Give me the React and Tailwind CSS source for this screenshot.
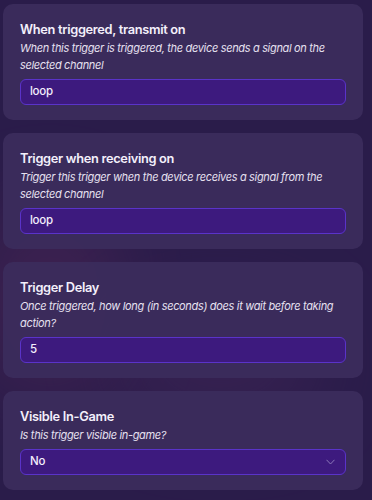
import React from "react";

function Field({ title, desc, value, select }) {
  return (
    <div className="rounded-[10px] bg-[#3b2c5c]/95 px-[17px] pt-[16px] pb-[15px]">
      <div className="text-[12.8px] font-semibold leading-[20px] tracking-[-0.3px] text-[#f4f0fb]">{title}</div>
      <div className="text-[11px] italic leading-[17px] tracking-[-0.33px] text-[#e6e0f0]">{desc}</div>
      <div className="mt-[5px] flex h-[26px] items-center justify-between rounded-[6px] border-[1.5px] border-[#5a33c9] bg-[#3d1a7e] pl-[9px] pr-[10px]">
        <span className="text-[11.5px] font-medium tracking-[-0.3px] text-[#f3eefc]">{value}</span>
        {select && (
          <svg width="9" height="6" viewBox="0 0 9 6" fill="none">
            <path d="M0.5 0.8L4.5 5L8.5 0.8" stroke="#8b78b8" strokeWidth="1" />
          </svg>
        )}
      </div>
    </div>
  );
}

export default function App() {
  return (
    <div
      className="relative h-[500px] w-[372px] overflow-hidden bg-[#2a1c4a]"
      style={{ fontFamily: "Inter, 'Noto Sans', sans-serif" }}
    >
      <div className="pointer-events-none absolute inset-0">
        <div className="absolute left-[-20px] top-[200px] h-[200px] w-[140px] rounded-full bg-[#5a2a5a] opacity-40 blur-2xl" />
        <div className="absolute left-[120px] top-[300px] h-[120px] w-[200px] rounded-full bg-[#4a2a5c] opacity-40 blur-2xl" />
      </div>
      <div className="relative flex flex-col gap-[13px] pl-[3px] pr-[9px] pt-[4px]">
        <Field
          title="When triggered, transmit on"
          desc="When this trigger is triggered, the device sends a signal on the selected channel"
          value="loop"
        />
        <Field
          title="Trigger when receiving on"
          desc="Trigger this trigger when the device receives a signal from the selected channel"
          value="loop"
        />
        <Field
          title="Trigger Delay"
          desc="Once triggered, how long (in seconds) does it wait before taking action?"
          value="5"
        />
        <Field
          title="Visible In-Game"
          desc="Is this trigger visible in-game?"
          value="No"
          select
        />
      </div>
    </div>
  );
}
